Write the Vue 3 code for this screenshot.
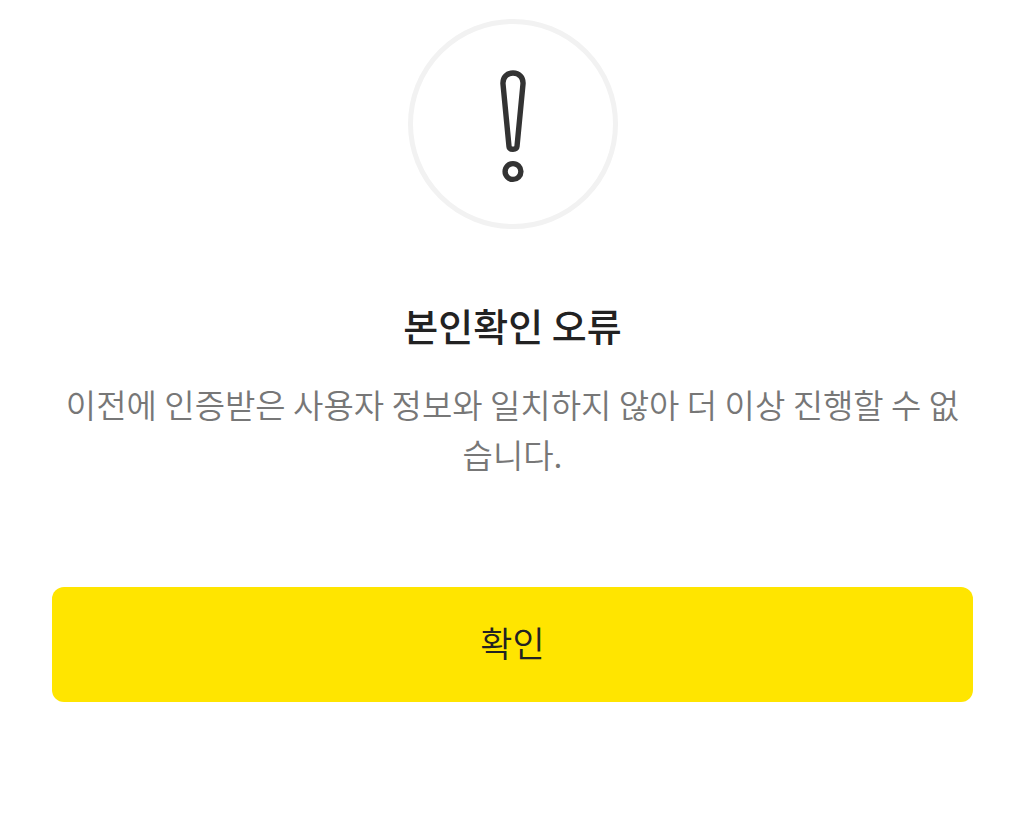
<script setup>
</script>

<template>
  <main class="page">
    <svg class="mark" viewBox="0 0 210 210" aria-hidden="true">
      <circle cx="105" cy="105" r="102.5" fill="none" stroke="#f2f2f2" stroke-width="5" />
      <g fill="none" stroke="#333" stroke-width="5.400">
        <path d="M105 54c-6.200 0-10.500 4.800-10 11l6 62.500c.4 3.600 7.600 3.600 8 0l6-62.500c.5-6.200-3.800-11-10-11z" />
        <circle cx="105" cy="152.500" r="7.900" />
      </g>
    </svg>
    <h1 class="title">본인확인 오류</h1>
    <p class="message">이전에 인증받은 사용자 정보와 일치하지 않아 더 이상 진행할 수 없습니다.</p>
    <button class="confirm" type="button">확인</button>
  </main>
</template>

<style>
body {
  background: #fff;
}
</style>

<style scoped>
.page {
  display: flex;
  flex-direction: column;
  align-items: center;
  padding: 19px 52px 116px;
  font-family: "Noto Sans CJK KR", sans-serif;
  text-align: center;
}
.mark {
  width: 210px;
  height: 210px;
}
.title {
  margin: 66px 0 0;
  font-size: 38px;
  font-weight: 500;
  line-height: 60px;
  color: #222;
}
.message {
  margin: 24px 0 0;
  font-size: 33px;
  font-weight: 350;
  line-height: 50px;
  color: #777;
  word-break: break-all;
}
.confirm {
  align-self: stretch;
  height: 115px;
  margin-top: 108px;
  padding: 0 0 6px;
  border: 0;
  border-radius: 12px;
  background: #ffe500;
  color: #222;
  font-family: inherit;
  font-size: 35px;
  font-weight: 350;
  cursor: pointer;
}
</style>
